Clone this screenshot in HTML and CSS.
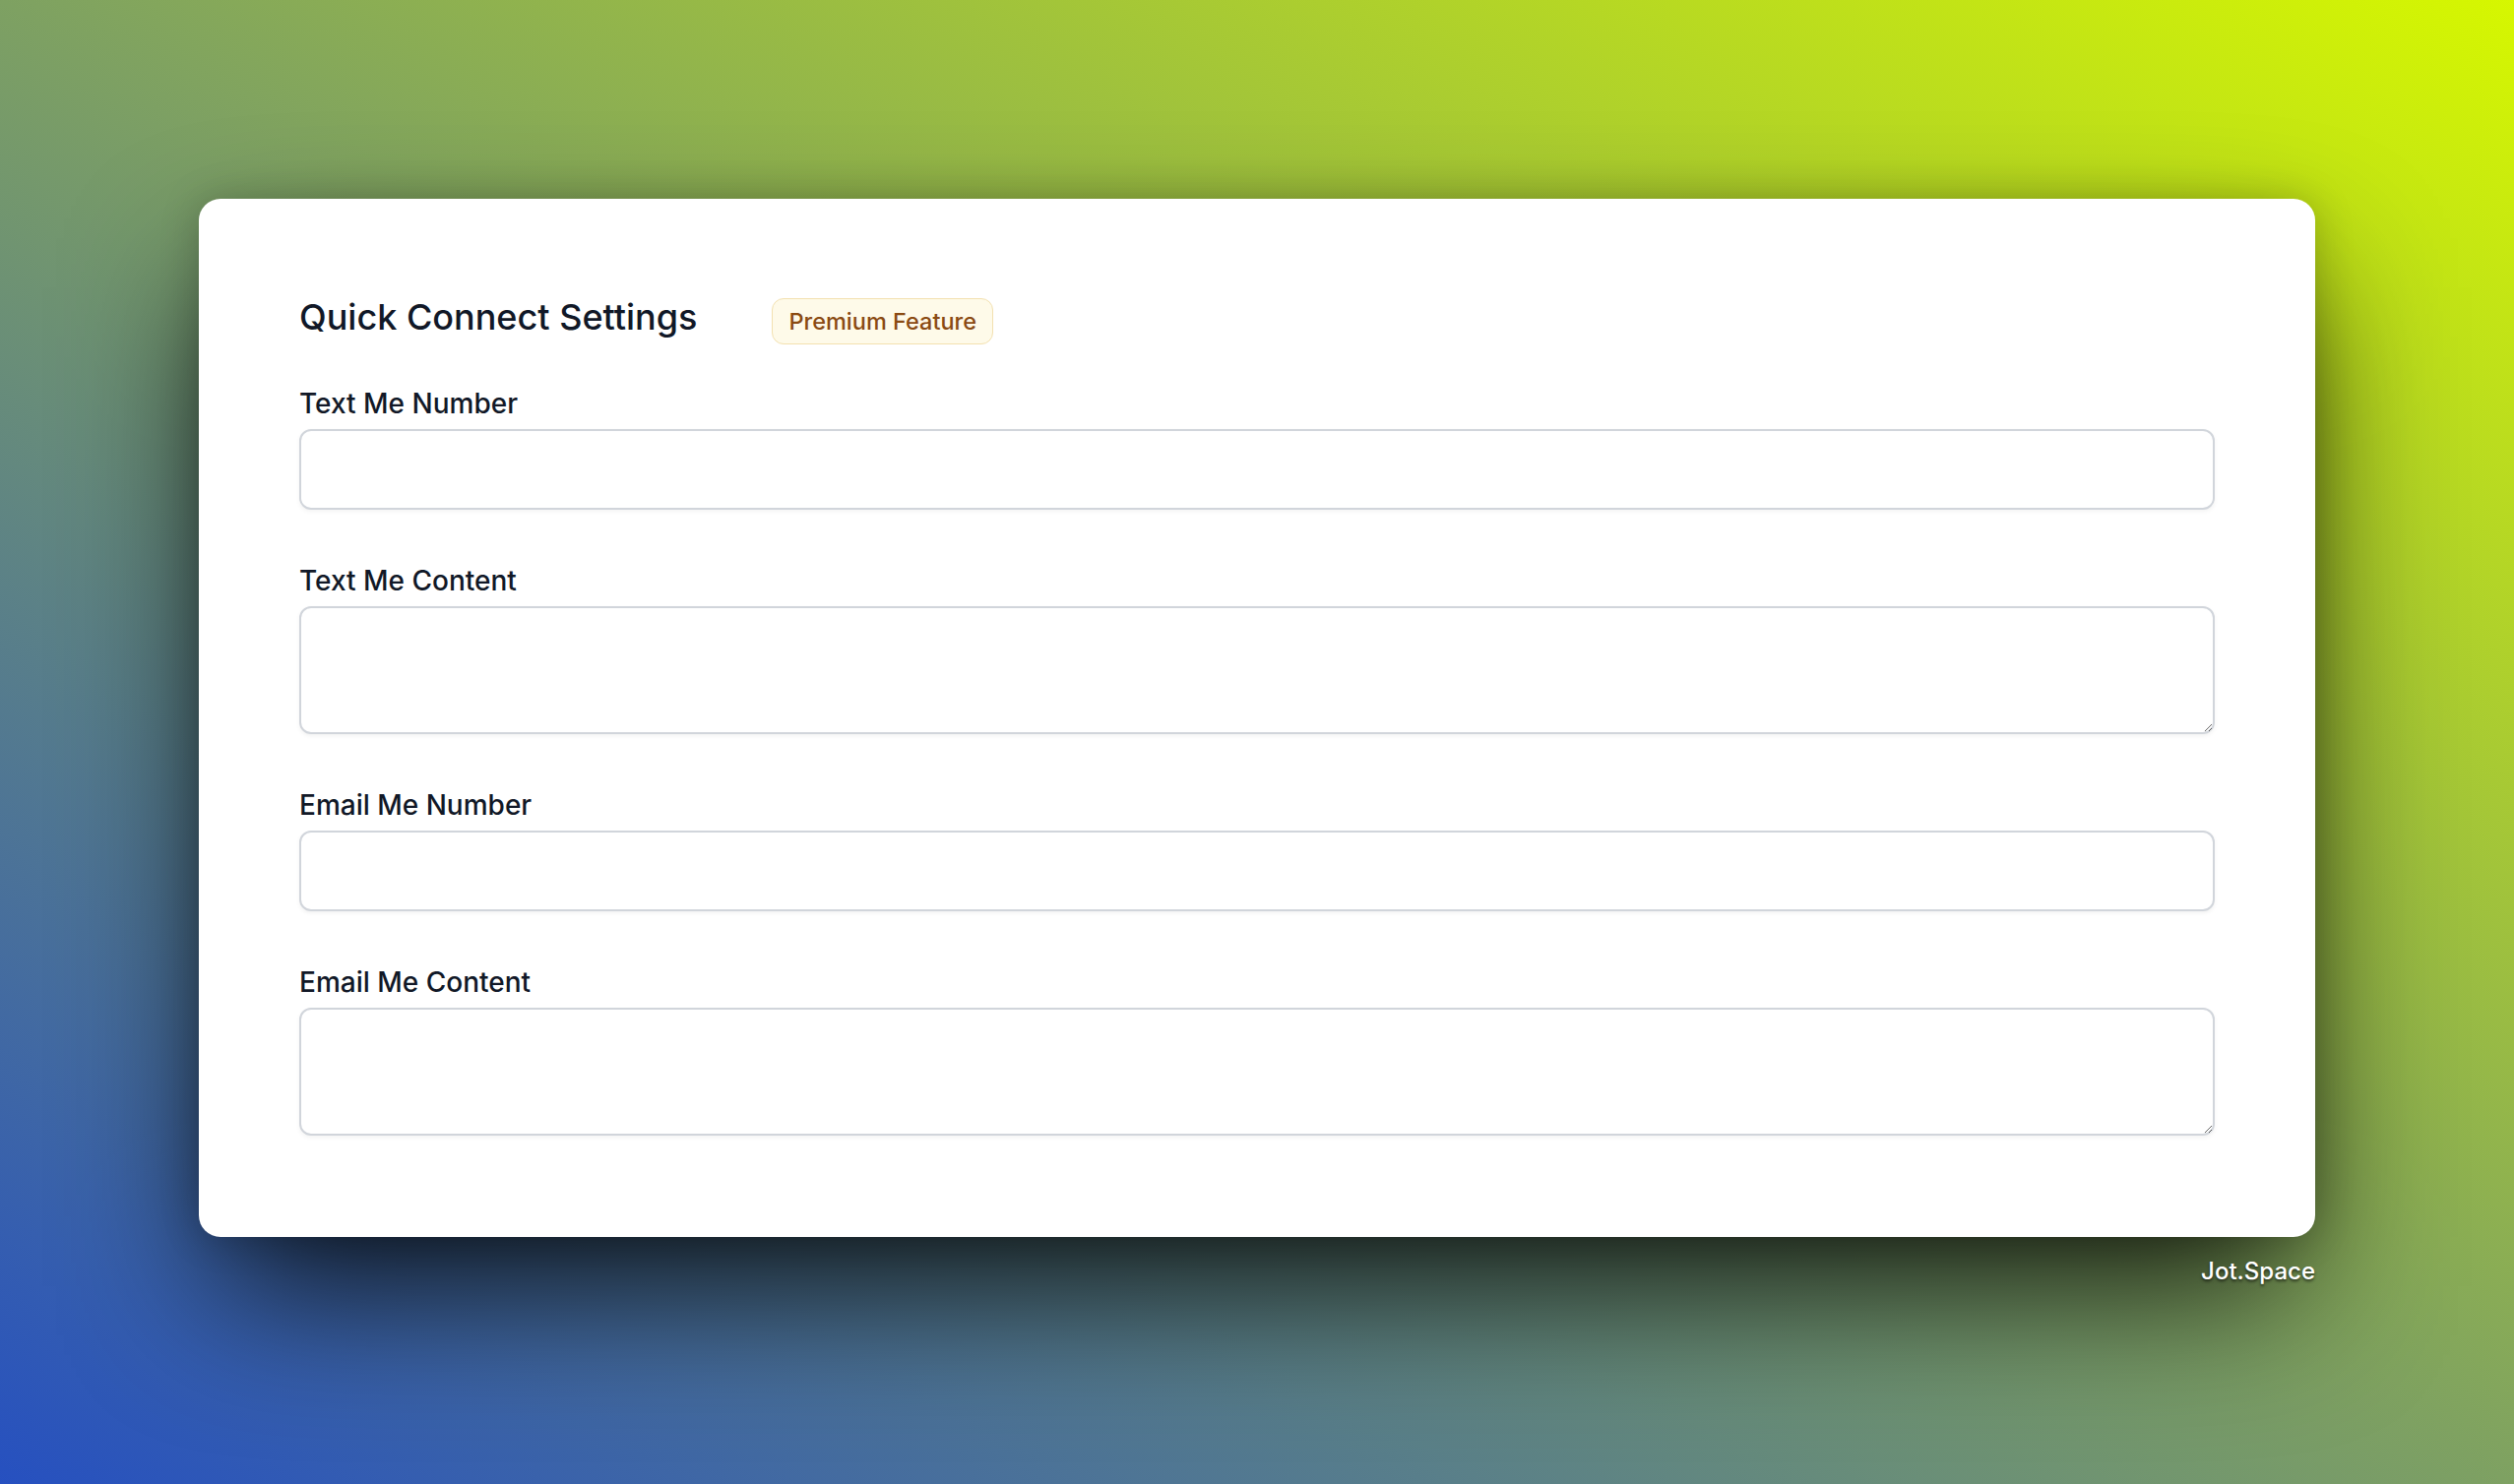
FILE: index.html
```html
<!DOCTYPE html>
<html lang="en">
<head>
  <meta charset="UTF-8">
  <meta name="viewport" content="width=device-width, initial-scale=1.0">
  <title>Quick Connect Settings</title>
  <link rel="stylesheet" href="styles.css">
</head>
<body>
  <div class="page">
    <div class="card">
      <div class="card-header">
        <h2 class="card-title">Quick Connect Settings</h2>
        <span class="badge">Premium Feature</span>
      </div>
      <div class="field">
        <label for="text-number">Text Me Number</label>
        <input type="text" id="text-number">
      </div>
      <div class="field">
        <label for="text-content">Text Me Content</label>
        <textarea id="text-content"></textarea>
      </div>
      <div class="field">
        <label for="email-number">Email Me Number</label>
        <input type="text" id="email-number">
      </div>
      <div class="field">
        <label for="email-content">Email Me Content</label>
        <textarea id="email-content"></textarea>
      </div>
    </div>
    <div class="brand">Jot.Space</div>
  </div>
</body>
</html>
```

FILE: styles.css
```css
* {
  margin: 0;
  padding: 0;
  box-sizing: border-box;
}
html, body {
  height: 100%;
}
body {
  font-family: Inter, 'Noto Sans', sans-serif;
  background: linear-gradient(to top right, #2650c0 0%, #7ea162 50%, #d6f700 100%);
  color: #111827;
}
.page {
  width: 2150px;
  padding-top: 202px;
  margin-left: 202px;
}
.card {
  background: #fff;
  border-radius: 22px;
  padding: 92px 102px 103px;
  box-shadow: 0 70px 150px -20px rgba(0, 0, 0, 0.85), 0 0 40px rgba(0, 0, 0, 0.2);
}
.card-header {
  display: flex;
  align-items: baseline;
  gap: 76px;
  margin-bottom: 40px;
}
.card-title {
  font-size: 36px;
  line-height: 56px;
  font-weight: 500;
  color: #111827;
}
.badge {
  font-size: 23.5px;
  line-height: 31px;
  padding: 7px 16px;
  border: 1.5px solid #f3e1b0;
  border-radius: 12px;
  background: #fefae9;
  color: #8a4a12;
  font-weight: 500;
}
.field + .field {
  margin-top: 52px;
}
.field label {
  display: block;
  font-size: 28px;
  line-height: 40px;
  font-weight: 500;
  margin-bottom: 6px;
  color: #111827;
}
.field input,
.field textarea {
  display: block;
  width: 100%;
  border: 2px solid #d1d5db;
  border-radius: 12px;
  background: #fff;
  box-shadow: 0 2px 4px rgba(0, 0, 0, 0.05);
  font-family: inherit;
  font-size: 28px;
  padding: 16px 22px;
  outline: none;
}
.field input {
  height: 82px;
}
.field textarea {
  height: 130px;
  resize: vertical;
}
.brand {
  text-align: right;
  margin-top: 18px;
  font-size: 24px;
  line-height: 34px;
  font-weight: 500;
  color: #fff;
  text-shadow: 0 2px 3px rgba(0, 0, 0, 0.6);
}
```
